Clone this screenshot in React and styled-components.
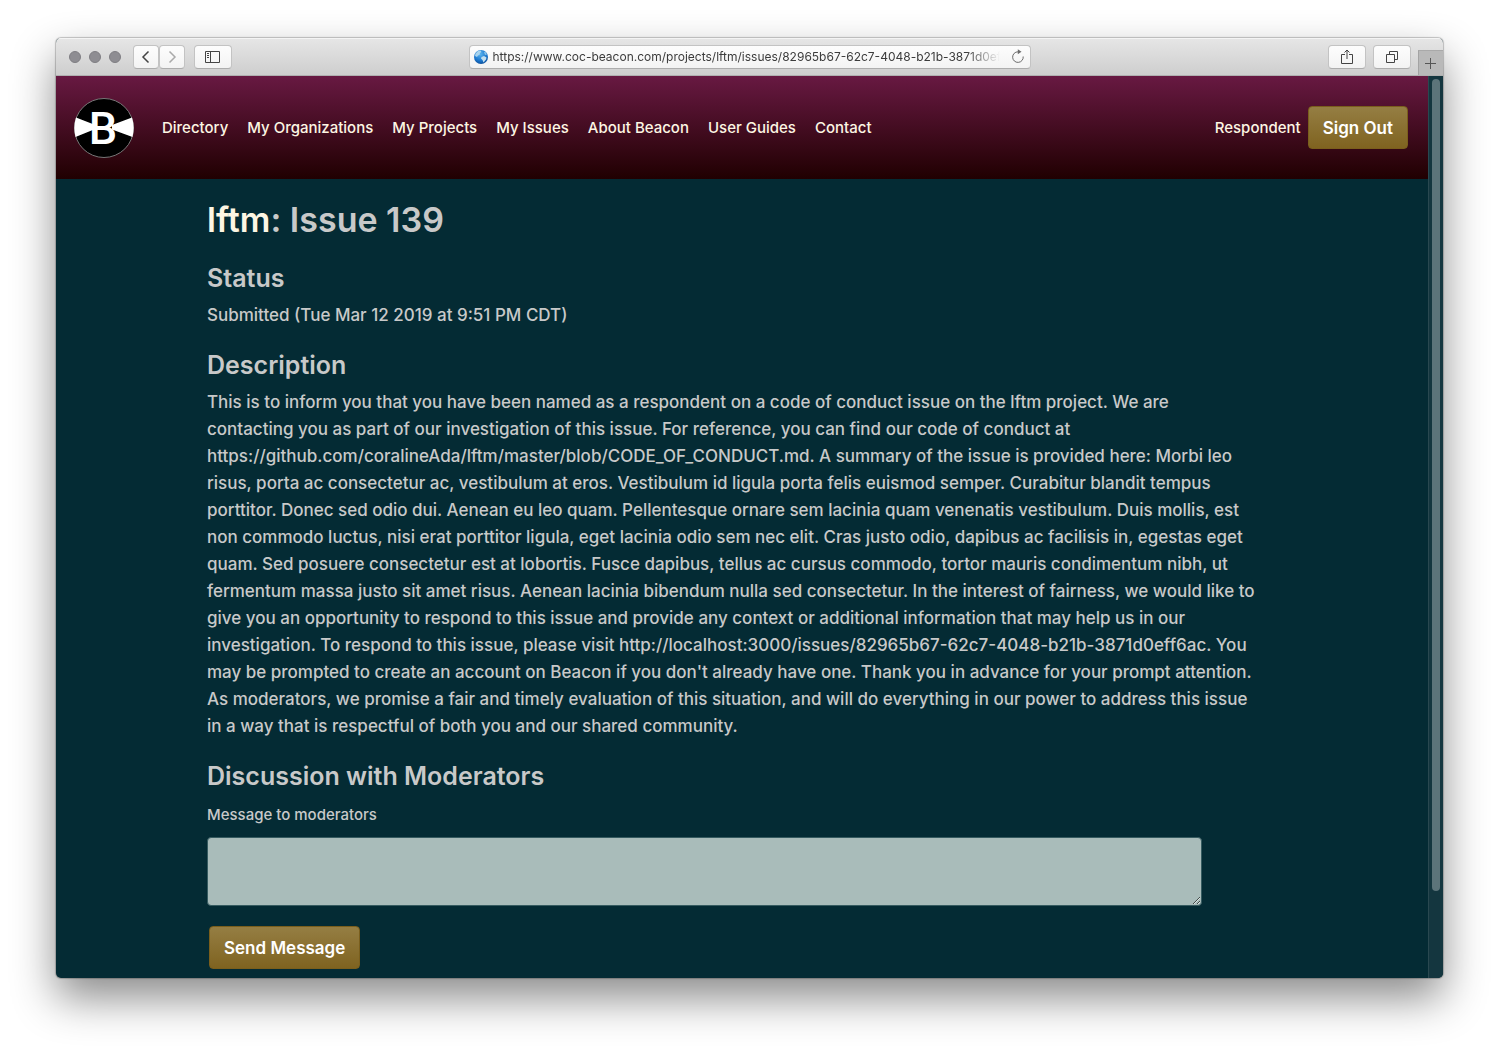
import React from "react";
import styled, { createGlobalStyle } from "styled-components";

const GlobalStyle = createGlobalStyle`
  *, *::before, *::after { box-sizing: border-box; }
  body {
    margin: 0;
    background: #fff;
    color: #c8c9c9;
    font-family: Inter, "Liberation Sans", sans-serif;
    font-size: 17px;
    font-weight: 500;
    line-height: 27px;
  }
  button, input, textarea { font-family: inherit; margin: 0; }
`;

const Desktop = styled.div`
  padding: 38px 56px 74px;
`;

const Window = styled.div`
  overflow: hidden;
  border-radius: 5px;
  background: #042b34;
  box-shadow: 0 0 1px 1px rgba(0, 0, 0, 0.22), 0 20px 44px rgba(0, 0, 0, 0.46);
`;

const TitleBar = styled.header`
  display: grid;
  grid-template-columns: 1fr minmax(0, 562px) 1fr;
  align-items: center;
  height: 38px;
  background: linear-gradient(#e6e6e6, #cecece);
  border-bottom: 1px solid #b0b0b0;
  box-shadow: inset 0 1px 0 #f4f4f4;
`;

const BarGroup = styled.div`
  display: flex;
  align-items: center;
  align-self: stretch;
  justify-content: ${(p) => (p.$end ? "flex-end" : "flex-start")};
  padding-left: ${(p) => (p.$end ? "0" : "13px")};
`;

const Lights = styled.div`
  display: flex;
  gap: 8px;
  margin-right: 12px;
`;

const Light = styled.span`
  width: 12px;
  height: 12px;
  border-radius: 50%;
  background: #8e8d92;
  border: 1px solid #7f7e83;
`;

const ToolButton = styled.button`
  display: flex;
  align-items: center;
  justify-content: center;
  width: 38px;
  height: 24px;
  padding: 0;
  margin-right: 7px;
  border: 1px solid #c3c3c3;
  border-bottom-color: #adadad;
  border-radius: 4px;
  background: linear-gradient(#fdfdfd, #f3f3f3);
  color: #444;
`;

const HistoryButtons = styled.div`
  display: flex;
  margin-right: 9px;
`;

const HistoryButton = styled(ToolButton)`
  width: 26px;
  margin-right: 0;
  color: ${(p) => (p.$dim ? "#aaa" : "#444")};
`;

const AddressBar = styled.div`
  display: flex;
  align-items: center;
  gap: 4px;
  height: 24px;
  padding: 0 4px 0 3px;
  border: 1px solid #c3c3c3;
  border-bottom-color: #adadad;
  border-radius: 4px;
  background: linear-gradient(#fdfdfd, #f3f3f3);
`;

const Address = styled.input`
  flex: 1;
  min-width: 0;
  height: 20px;
  padding: 0;
  border: 0;
  outline: 0;
  background: transparent;
  color: #3c3c3c;
  font-size: 12px;
  mask-image: linear-gradient(to right, #000 calc(100% - 40px), transparent calc(100% - 6px));
`;

const ReloadButton = styled.button`
  display: flex;
  padding: 0;
  border: 0;
  background: transparent;
  color: #6b6b6b;
`;

const NewTab = styled.button`
  display: flex;
  align-items: center;
  justify-content: center;
  align-self: flex-end;
  width: 25px;
  height: 25px;
  padding: 0;
  border: 0;
  border-left: 1px solid #a3a3a3;
  border-top: 1px solid #a9a9a9;
  background: #b9b9b9;
  color: #555;
`;

const Viewport = styled.div`
  display: flex;
`;

const Page = styled.div`
  flex: 1;
  min-width: 0;
`;

const ScrollTrack = styled.div`
  width: 15px;
  padding: 3px;
  border-left: 1px solid #294850;
  background: #14363f;
`;

const ScrollThumb = styled.div`
  width: 8px;
  height: calc(100% - 84px);
  border-radius: 4px;
  background: #5c747a;
`;

const Nav = styled.nav`
  display: flex;
  align-items: center;
  height: 103px;
  padding: 0 20px 0 18px;
  background: linear-gradient(#681942, #200001);
`;

const NavLinks = styled.ul`
  display: flex;
  gap: 19px;
  flex: 1;
  margin: 0 0 0 28px;
  padding: 0;
  list-style: none;
`;

const NavLink = styled.a`
  display: block;
  color: #fdf6e3;
  font-size: 15px;
  font-weight: 500;
  line-height: 24px;
  white-space: nowrap;
  text-decoration: none;
`;

const Account = styled.div`
  display: flex;
  align-items: center;
  gap: 7px;
`;

const GoldButton = styled.button`
  height: 43px;
  padding: 0 14px;
  border: 1px solid #7a5e1c;
  border-radius: 4px;
  background: linear-gradient(#957e43, #7f6320);
  color: #fff;
  font-size: 17px;
  font-weight: 600;
`;

const Main = styled.main`
  max-width: 1070px;
  margin: 0 auto;
  padding: 19px 0 9px;
`;

const Title = styled.h1`
  margin: 0 0 20px;
  font-size: 34px;
  font-weight: 600;
  line-height: 44px;
`;

const TitleLink = styled.a`
  color: #fdf6e3;
  text-decoration: none;
`;

const Heading = styled.h2`
  margin: 0 0 8px;
  font-size: 25px;
  font-weight: 600;
  line-height: 32px;
`;

const Text = styled.p`
  margin: 0 0 20px;
  white-space: pre-line;
`;

const MessageForm = styled.form`
  display: flex;
  flex-direction: column;
  align-items: flex-start;
`;

const Label = styled.label`
  margin: 3px 0 10px;
  font-size: 15px;
  line-height: 24px;
`;

const MessageBox = styled.textarea`
  width: 93%;
  height: 69px;
  margin-bottom: 20px;
  border: 1px solid #365b60;
  border-radius: 4px;
  background: #a9bcba;
`;

const FormActions = styled.div`
  display: flex;
  padding-left: 2px;
`;

const links = [
  "Directory",
  "My Organizations",
  "My Projects",
  "My Issues",
  "About Beacon",
  "User Guides",
  "Contact",
];

const description = `This is to inform you that you have been named as a respondent on a code of conduct issue on the lftm project. We are
contacting you as part of our investigation of this issue. For reference, you can find our code of conduct at
https://github.com/coralineAda/lftm/master/blob/CODE_OF_CONDUCT.md. A summary of the issue is provided here: Morbi leo
risus, porta ac consectetur ac, vestibulum at eros. Vestibulum id ligula porta felis euismod semper. Curabitur blandit tempus
porttitor. Donec sed odio dui. Aenean eu leo quam. Pellentesque ornare sem lacinia quam venenatis vestibulum. Duis mollis, est
non commodo luctus, nisi erat porttitor ligula, eget lacinia odio sem nec elit. Cras justo odio, dapibus ac facilisis in, egestas eget
quam. Sed posuere consectetur est at lobortis. Fusce dapibus, tellus ac cursus commodo, tortor mauris condimentum nibh, ut
fermentum massa justo sit amet risus. Aenean lacinia bibendum nulla sed consectetur. In the interest of fairness, we would like to
give you an opportunity to respond to this issue and provide any context or additional information that may help us in our
investigation. To respond to this issue, please visit http://localhost:3000/issues/82965b67-62c7-4048-b21b-3871d0eff6ac. You
may be prompted to create an account on Beacon if you don't already have one. Thank you in advance for your prompt attention.
As moderators, we promise a fair and timely evaluation of this situation, and will do everything in our power to address this issue
in a way that is respectful of both you and our shared community.`;

function Icon({ size = 16, children }) {
  return (
    <svg width={size} height={size} viewBox="0 0 16 16" fill="none" stroke="currentColor" aria-hidden="true">
      {children}
    </svg>
  );
}

function Globe() {
  return (
    <svg width="16" height="16" viewBox="0 0 16 16" aria-hidden="true">
      <defs>
        <radialGradient id="sea" cx="45%" cy="30%" r="75%">
          <stop offset="0" stopColor="#5bb4ee" />
          <stop offset="0.6" stopColor="#1c78cf" />
          <stop offset="1" stopColor="#0b4a94" />
        </radialGradient>
      </defs>
      <circle cx="8" cy="8" r="7" fill="url(#sea)" />
      <path d="M2.5 4.5 5 2l2.500-.5 1 1.500L7 4l-.5 2-1.500.5L4 8 2 7z" fill="#a9d4ee" />
      <path d="m8.500 8 2.500-1 2.500 1.500-.5 2-2.500 3-1-2.500-1.500-1.500z" fill="#c3dfee" />
      <path d="m11 3 1.500 0 1.500 2.500-2 .5z" fill="#8cc5ea" />
    </svg>
  );
}

function Logo() {
  return (
    <svg width="60" height="60" viewBox="0 0 60 60" role="img" aria-label="Beacon">
      <circle cx="30" cy="30" r="29.500" fill="#000" stroke="#777" />
      <path
        d="M2 19.500 20 26.500v5L1.500 39Q-1 29 2 19.500zM58 19.500 38 27v4.500L58.500 39Q61 29 58 19.500z"
        fill="#fff"
      />
      <text
        x="29"
        y="46"
        textAnchor="middle"
        fontFamily="Roboto, sans-serif"
        fontSize="45"
        fontWeight="500"
        fill="#fff"
      >
        B
      </text>
    </svg>
  );
}

export default function App() {
  return (
    <Desktop>
      <GlobalStyle />
      <Window>
        <TitleBar>
          <BarGroup>
            <Lights>
              <Light />
              <Light />
              <Light />
            </Lights>
            <HistoryButtons>
              <HistoryButton aria-label="Back">
                <Icon>
                  <path d="M10.500 2.500 5 8l5.500 5.500" strokeWidth="1.500" />
                </Icon>
              </HistoryButton>
              <HistoryButton $dim aria-label="Forward">
                <Icon>
                  <path d="M5.500 2.500 11 8l-5.500 5.500" strokeWidth="1.500" />
                </Icon>
              </HistoryButton>
            </HistoryButtons>
            <ToolButton aria-label="Sidebar">
              <Icon>
                <path d="M.5 2.500h14v11H.5zM5.500 2.500v11M2 4.500h2M2 6.500h2M2 8.500h2" />
              </Icon>
            </ToolButton>
          </BarGroup>
          <AddressBar>
            <Globe />
            <Address
              aria-label="Address"
              readOnly
              value="https://www.coc-beacon.com/projects/lftm/issues/82965b67-62c7-4048-b21b-3871d0eff6ac"
            />
            <ReloadButton aria-label="Reload">
              <Icon>
                <path d="M13.200 7.500A5.300 5.300 0 1 1 8 2.800h1.500" />
                <path d="M7.800.3v5l3.700-2.500z" fill="currentColor" stroke="none" />
              </Icon>
            </ReloadButton>
          </AddressBar>
          <BarGroup $end>
            <ToolButton aria-label="Share">
              <Icon>
                <path d="M6 5.500H2.500v9h11v-9H10M8 10V1M5.500 3.500 8 1l2.500 2.500" />
              </Icon>
            </ToolButton>
            <ToolButton aria-label="Show tabs">
              <Icon>
                <path d="M2.500 5.500h8v8h-8zM5.500 5.500v-3h8v8h-3" />
              </Icon>
            </ToolButton>
            <NewTab aria-label="New tab">
              <Icon>
                <path d="M7.500 3v11M2 8.500h11" />
              </Icon>
            </NewTab>
          </BarGroup>
        </TitleBar>
        <Viewport>
          <Page>
            <Nav>
              <Logo />
              <NavLinks>
                {links.map((name) => (
                  <li key={name}>
                    <NavLink href="#">{name}</NavLink>
                  </li>
                ))}
              </NavLinks>
              <Account>
                <NavLink href="#">Respondent</NavLink>
                <GoldButton>Sign Out</GoldButton>
              </Account>
            </Nav>
            <Main>
              <Title>
                <TitleLink href="#">lftm</TitleLink>: Issue 139
              </Title>
              <Heading>Status</Heading>
              <Text>Submitted (Tue Mar 12 2019 at 9:51 PM CDT)</Text>
              <Heading>Description</Heading>
              <Text>{description}</Text>
              <Heading>Discussion with Moderators</Heading>
              <MessageForm onSubmit={(e) => e.preventDefault()}>
                <Label htmlFor="message">Message to moderators</Label>
                <MessageBox id="message" />
                <FormActions>
                  <GoldButton>Send Message</GoldButton>
                </FormActions>
              </MessageForm>
            </Main>
          </Page>
          <ScrollTrack>
            <ScrollThumb />
          </ScrollTrack>
        </Viewport>
      </Window>
    </Desktop>
  );
}
